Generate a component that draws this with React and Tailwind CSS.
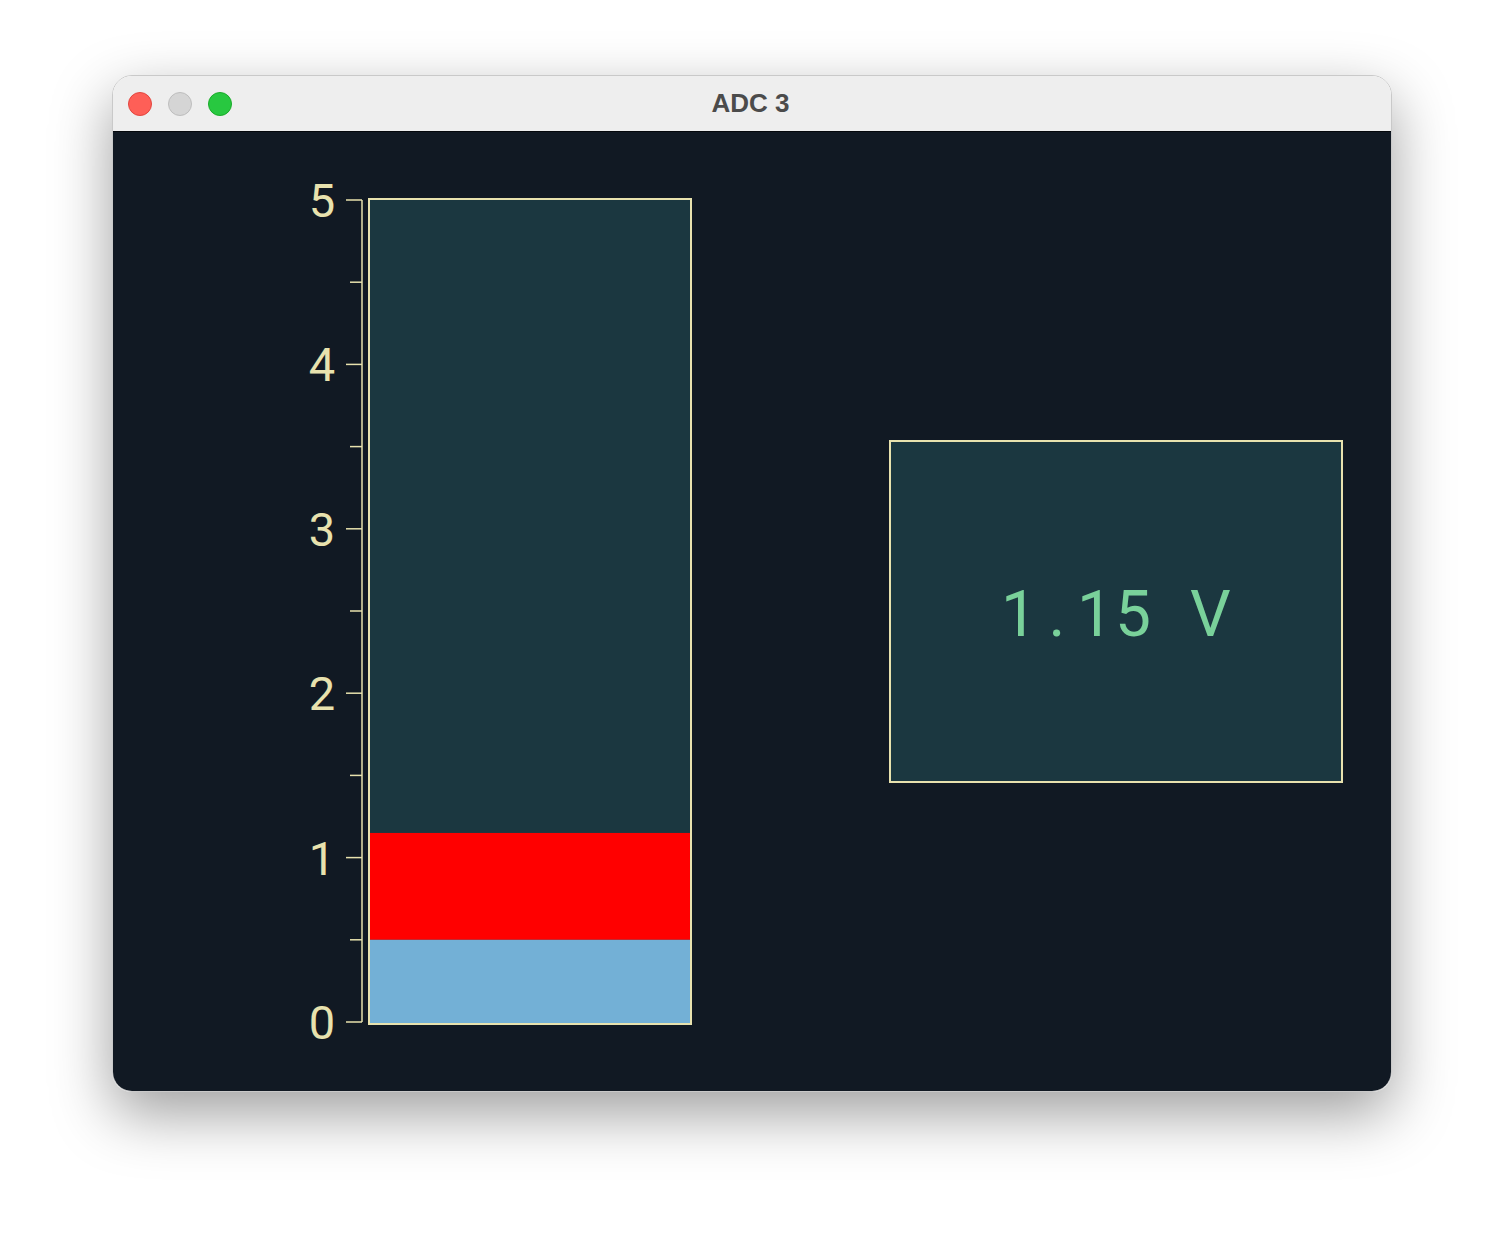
import React from 'react';

const UNIT = 164.4;
const Y0 = 850;
const AXIS = '#e8e2ae';
const MONO = 'Roboto, "DejaVu Sans Mono", monospace';

const yOf = (v) => Y0 - v * UNIT;

const Gauge = ({ value = 1.15, low = 0.5, max = 5 }) => {
  const ticks = [];
  for (let i = 0; i <= max * 2; i++) ticks.push(i / 2);

  return (
    <svg width="420" height="880" className="shrink-0">
      {/* bar */}
      <rect x="77" y={yOf(max) - 1} width="322" height={Y0 - yOf(max) + 3} fill="#1b3740" />
      <rect x="77" y={yOf(value)} width="322" height={yOf(low) - yOf(value)} fill="#ff0000" />
      <rect x="77" y={yOf(low)} width="322" height={Y0 + 2 - yOf(low)} fill="#73b0d6" />
      <rect x="77" y={yOf(max) - 1} width="322" height={Y0 - yOf(max) + 3} fill="none" stroke={AXIS} strokeWidth="2" />

      {/* axis */}
      <line x1="70" y1={yOf(max)} x2="70" y2={Y0} stroke={AXIS} strokeWidth="1.5" />
      {ticks.map((t) => (
        <line
          key={t}
          x1={Number.isInteger(t) ? 54 : 58}
          y1={yOf(t)}
          x2="70"
          y2={yOf(t)}
          stroke={AXIS}
          strokeWidth="1.5"
        />
      ))}
      {ticks.filter(Number.isInteger).map((t) => (
        <text
          key={t}
          x="30"
          y={yOf(t) + 17}
          textAnchor="middle"
          fill={AXIS}
          fontSize="47"
          fontFamily={MONO}
        >
          {t}
        </text>
      ))}
    </svg>
  );
};

export default function App() {
  const reading = '1.15 V';

  return (
    <div className="w-[1504px] h-[1240px] bg-white pt-[75px] pl-[112px]">
      <div className="w-[1280px] h-[1017px] rounded-[20px] overflow-hidden border border-[#c9c9c9] shadow-[0_22px_60px_rgba(0,0,0,0.38)] flex flex-col">
        {/* title bar */}
        <div className="h-[56px] bg-[#eeeeee] border-b border-[#05080c] flex items-center relative shrink-0">
          <div className="flex items-center gap-4 pl-[15px]">
            <span className="w-6 h-6 rounded-full bg-[#fe5f57] border border-[#e2463f]" />
            <span className="w-6 h-6 rounded-full bg-[#d5d5d5] border border-[#bdbdbd]" />
            <span className="w-6 h-6 rounded-full bg-[#28c840] border border-[#1aab29]" />
          </div>
          <div className="absolute inset-0 flex items-center justify-center pr-[3px] text-[26px] font-bold text-[#4b4b4b] font-['Liberation_Sans',Arial,sans-serif]">
            ADC 3
          </div>
        </div>

        {/* content */}
        <div className="flex-1 bg-[#111923] flex items-start pl-[179px] pt-[40px]">
          <Gauge />
          <div className="ml-[177px] mt-[268px] w-[454px] h-[343px] bg-[#1b3740] border-2 border-[#e8e2ae] flex items-center justify-center">
            <div className="flex text-[64px] leading-none text-[#79d19a] font-['Roboto',sans-serif] pt-[6px] pr-[4px]">
              {reading.split('').map((ch, i) => (
                <span key={i} className="w-[38px] text-center whitespace-pre">
                  {ch}
                </span>
              ))}
            </div>
          </div>
        </div>
      </div>
    </div>
  );
}
